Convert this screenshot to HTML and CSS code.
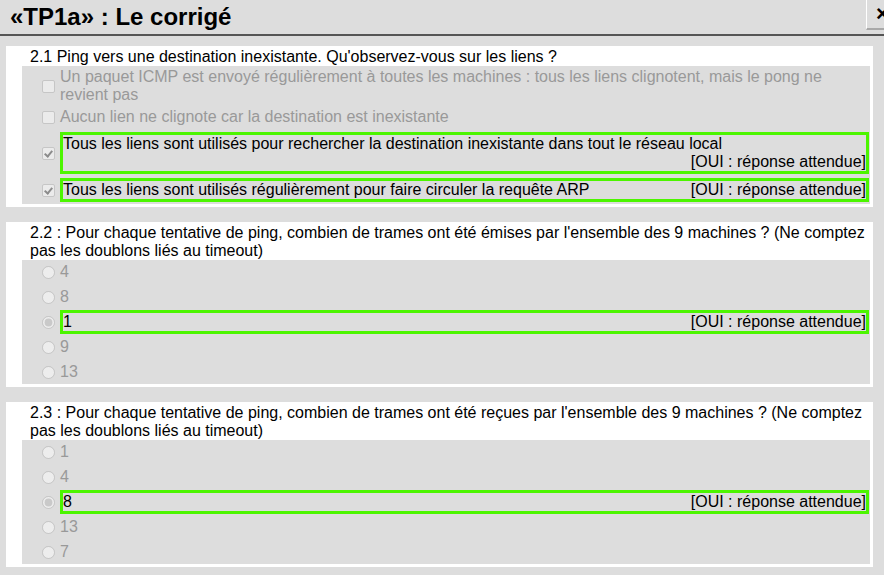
FILE: index.html
```html
<!DOCTYPE html>
<html lang="fr">
<head>
<meta charset="utf-8">
<title>«TP1a» : Le corrigé</title>
<link rel="stylesheet" href="styles.css">
</head>
<body>
<header class="topbar">
  <h1 class="title">«TP1a» : Le corrigé</h1>
  <button class="close" type="button">×</button>
</header>

<section class="panel">
  <div class="question">2.1 Ping vers une destination inexistante. Qu'observez-vous sur les liens ?</div>
  <div class="choices checks">
    <div class="opt"><input type="checkbox" disabled><span class="ans">Un paquet ICMP est envoyé régulièrement à toutes les machines : tous les liens clignotent, mais le pong ne revient pas</span></div>
    <div class="opt"><input type="checkbox" disabled><span class="ans">Aucun lien ne clignote car la destination est inexistante</span></div>
    <div class="opt good"><input type="checkbox" checked disabled><span class="ans ok"><span class="txt">Tous les liens sont utilisés pour rechercher la destination inexistante dans tout le réseau local</span><span class="tag">[OUI : réponse attendue]</span></span></div>
    <div class="opt good"><input type="checkbox" checked disabled><span class="ans ok"><span class="txt">Tous les liens sont utilisés régulièrement pour faire circuler la requête ARP</span><span class="tag">[OUI : réponse attendue]</span></span></div>
  </div>
</section>

<section class="panel">
  <div class="question">2.2 : Pour chaque tentative de ping, combien de trames ont été émises par l'ensemble des 9 machines ? (Ne comptez pas les doublons liés au timeout)</div>
  <div class="choices radios">
    <div class="opt"><input type="radio" name="q22" disabled><span class="ans">4</span></div>
    <div class="opt"><input type="radio" name="q22" disabled><span class="ans">8</span></div>
    <div class="opt"><input type="radio" name="q22" checked disabled><span class="ans ok"><span class="txt">1</span><span class="tag">[OUI : réponse attendue]</span></span></div>
    <div class="opt"><input type="radio" name="q22" disabled><span class="ans">9</span></div>
    <div class="opt"><input type="radio" name="q22" disabled><span class="ans">13</span></div>
  </div>
</section>

<section class="panel">
  <div class="question">2.3 : Pour chaque tentative de ping, combien de trames ont été reçues par l'ensemble des 9 machines ? (Ne comptez pas les doublons liés au timeout)</div>
  <div class="choices radios">
    <div class="opt"><input type="radio" name="q23" disabled><span class="ans">1</span></div>
    <div class="opt"><input type="radio" name="q23" disabled><span class="ans">4</span></div>
    <div class="opt"><input type="radio" name="q23" checked disabled><span class="ans ok"><span class="txt">8</span><span class="tag">[OUI : réponse attendue]</span></span></div>
    <div class="opt"><input type="radio" name="q23" disabled><span class="ans">13</span></div>
    <div class="opt"><input type="radio" name="q23" disabled><span class="ans">7</span></div>
  </div>
</section>
</body>
</html>
```

FILE: styles.css
```css
html, body {
  margin: 0;
  padding: 0;
  overflow: hidden;
}

body {
  background: #dddddd;
  font-family: "Liberation Sans", Arial, sans-serif;
  font-size: 16px;
  line-height: 18px;
  color: #000;
  position: relative;
  height: 575px;
}

.topbar {
  border-bottom: 2px solid #555;
  padding: 0 0 0 10px;
  box-sizing: border-box;
  height: 36px;
}

.title {
  margin: 0;
  padding-top: 3px;
  font-size: 24px;
  line-height: 27px;
  font-weight: bold;
  color: #000;
}

.close {
  position: absolute;
  top: 0;
  left: 866px;
  width: 18px;
  height: 30px;
  margin: 0;
  padding: 0 0 0 9px;
  box-sizing: border-box;
  background: #dddddd;
  border: 0;
  border-left: 1px solid #fff;
  border-bottom: 2px solid #a8a8a8;
  font-family: "Liberation Sans", Arial, sans-serif;
  font-size: 22px;
  font-weight: bold;
  line-height: 26px;
  text-align: left;
  overflow: hidden;
  color: #000;
}

.panel {
  background: #fff;
  margin: 10px 11px 15px 6px;
  padding: 2px 3px 3px 16px;
}

.question {
  padding-left: 8px;
  color: #000;
}

.choices {
  background: #dddddd;
  display: flex;
  flex-direction: column;
}

.checks {
  padding-bottom: 2px;
}

.radios {
  gap: 1px;
}

.opt {
  display: flex;
  align-items: center;
  padding: 2px 0;
}

.checks .opt.good {
  padding: 4px 0 0;
}

.radios .opt {
  padding: 0;
  min-height: 24px;
}

.opt input {
  width: 13px;
  height: 13px;
  margin: 0 5px 0 20px;
  flex: none;
}

.checks input {
  -webkit-appearance: none;
  appearance: none;
  box-sizing: border-box;
  border: 1px solid #c6c6c6;
  border-radius: 2px;
  background: #ebebeb;
  position: relative;
}

.checks input:checked::after {
  content: "";
  position: absolute;
  left: 3px;
  top: 1px;
  width: 3px;
  height: 6px;
  border-right: 2px solid #8c8c8c;
  border-bottom: 2px solid #8c8c8c;
  transform: rotate(40deg);
}

.ans {
  flex: 1;
  color: #999;
}

.ans.ok {
  color: #000;
  border: 3px solid #4cf500;
  margin-right: 1px;
  display: flex;
  flex-wrap: wrap;
  justify-content: space-between;
}

.tag {
  margin-left: auto;
}
```
